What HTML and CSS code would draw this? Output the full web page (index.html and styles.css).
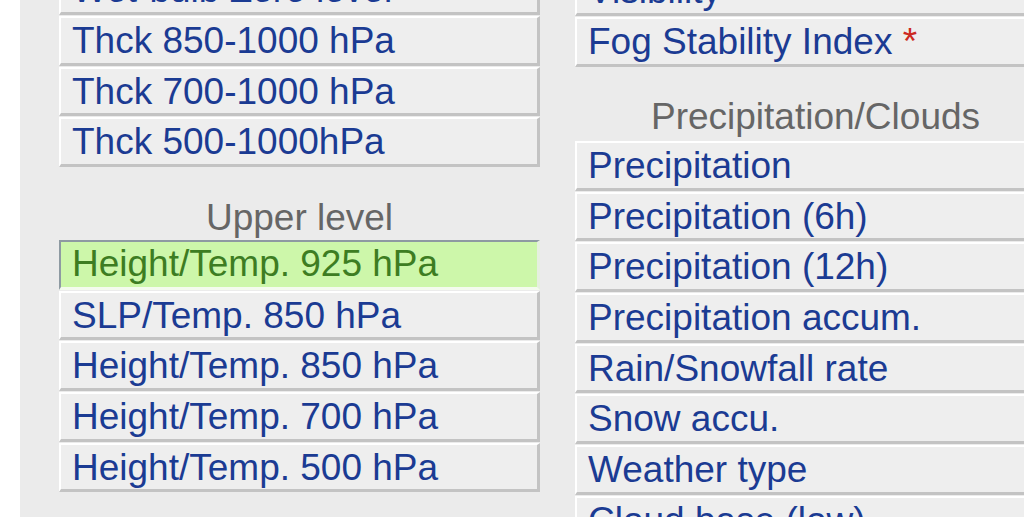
FILE: index.html
```html
<!DOCTYPE html>
<html>
<head>
<meta charset="utf-8">
<link rel="stylesheet" href="styles.css">
</head>
<body>
<div class="panel">
  <div class="col col-left">
    <div class="item">Wet-bulb Zero level</div>
    <div class="item">Thck 850-1000 hPa</div>
    <div class="item">Thck 700-1000 hPa</div>
    <div class="item">Thck 500-1000hPa</div>
    <div class="heading">Upper level</div>
    <div class="item selected">Height/Temp. 925 hPa</div>
    <div class="item">SLP/Temp. 850 hPa</div>
    <div class="item">Height/Temp. 850 hPa</div>
    <div class="item">Height/Temp. 700 hPa</div>
    <div class="item">Height/Temp. 500 hPa</div>
  </div>
  <div class="col col-right">
    <div class="item">Visibility</div>
    <div class="item">Fog Stability Index <span class="star">*</span></div>
    <div class="heading heading-right">Precipitation/Clouds</div>
    <div class="item">Precipitation</div>
    <div class="item">Precipitation (6h)</div>
    <div class="item">Precipitation (12h)</div>
    <div class="item">Precipitation accum.</div>
    <div class="item">Rain/Snowfall rate</div>
    <div class="item">Snow accu.</div>
    <div class="item">Weather type</div>
    <div class="item">Cloud base (low)</div>
  </div>
</div>
</body>
</html>
```
FILE: styles.css
```css
html, body {
  margin: 0;
  padding: 0;
  background: #ffffff;
  overflow: hidden;
  height: 517px;
}

body {
  font-family: "Liberation Sans", Arial, sans-serif;
  font-size: 37px;
}

.panel {
  margin-left: 20px;
  height: 517px;
  overflow: hidden;
  background: #ebebeb;
  display: flex;
  align-items: flex-start;
  gap: 35px;
  padding-left: 39px;
}

.col {
  flex: 0 0 481px;
  width: 481px;
  display: flex;
  flex-direction: column;
}

.col-left {
  margin-top: -34.7px;
}

.col-right {
  margin-top: -33.7px;
}

.item {
  box-sizing: border-box;
  height: 49.7px;
  margin-bottom: 1px;
  border-top: 2px solid #ffffff;
  border-left: 2px solid #ffffff;
  border-bottom: 3px solid #c3c3c3;
  border-right: 3px solid #c3c3c3;
  background: #eeeeee;
  color: #1b3b93;
  line-height: 42px;
  padding-top: 2px;
  padding-left: 11px;
  white-space: nowrap;
  overflow: hidden;
}

.item.selected {
  background: #cdf7aa;
  color: #3d7d22;
  border-top: 2px solid #8e9aa2;
  border-left: 2px solid #8e9aa2;
  border-bottom: 3px solid #f4fbee;
  border-right: 3px solid #e6efe0;
  padding-top: 1px;
}

.star {
  color: #cc2a22;
}

.heading {
  box-sizing: border-box;
  height: 71.9px;
  padding-top: 29px;
  line-height: 42px;
  text-align: center;
  color: #666666;
  white-space: nowrap;
}

.heading-right {
  height: 73.3px;
  padding-top: 28px;
}
```
